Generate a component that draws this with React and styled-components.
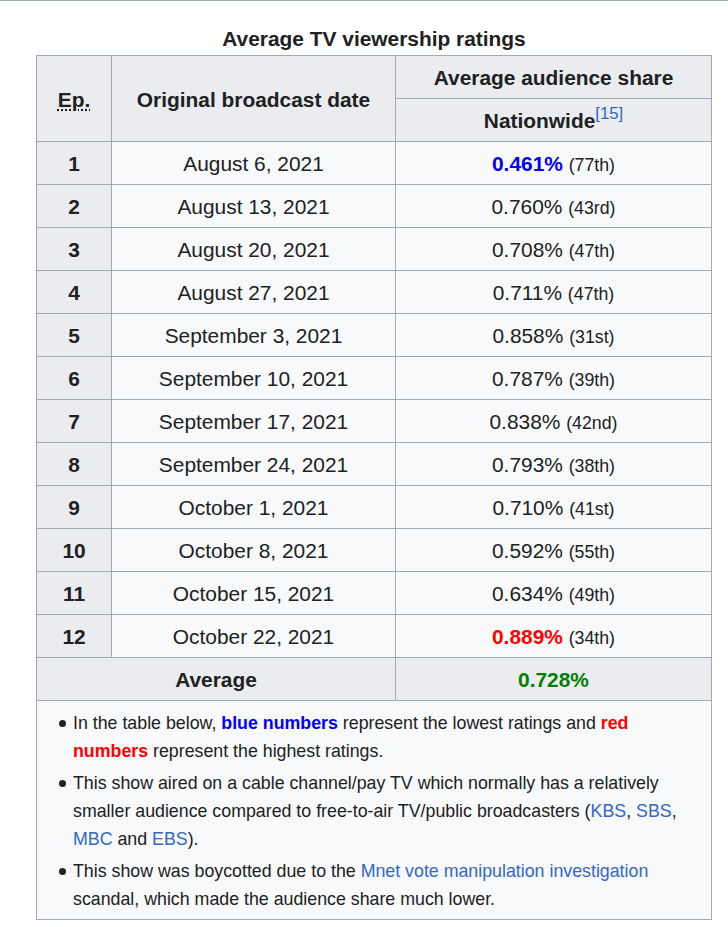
import React from "react";
import styled, {createGlobalStyle} from "styled-components";

const rows = [
  {ep: 1, date: "August 6, 2021", share: "0.461%", rank: "77th", mark: "low"},
  {ep: 2, date: "August 13, 2021", share: "0.760%", rank: "43rd"},
  {ep: 3, date: "August 20, 2021", share: "0.708%", rank: "47th"},
  {ep: 4, date: "August 27, 2021", share: "0.711%", rank: "47th"},
  {ep: 5, date: "September 3, 2021", share: "0.858%", rank: "31st"},
  {ep: 6, date: "September 10, 2021", share: "0.787%", rank: "39th"},
  {ep: 7, date: "September 17, 2021", share: "0.838%", rank: "42nd"},
  {ep: 8, date: "September 24, 2021", share: "0.793%", rank: "38th"},
  {ep: 9, date: "October 1, 2021", share: "0.710%", rank: "41st"},
  {ep: 10, date: "October 8, 2021", share: "0.592%", rank: "55th"},
  {ep: 11, date: "October 15, 2021", share: "0.634%", rank: "49th"},
  {ep: 12, date: "October 22, 2021", share: "0.889%", rank: "34th", mark: "high"},
];

const GlobalStyle = createGlobalStyle`
  body {
    margin: 0;
    background: #fff;
    font-family: "Liberation Sans", Arial, sans-serif;
    color: #202122;
  }
`;

const Page = styled.div`
  border-top: 1px solid #a2a9b1;
  padding: 21px 0 0 36px;
`;

const Table = styled.table`
  width: 675px;
  table-layout: fixed;
  border-collapse: collapse;
  background: #f8f9fa;
  font-size: 20.9px;
  line-height: 33px;
  color: #202122;

  caption {
    font-weight: bold;
    text-align: center;
    padding: 0;
  }
`;

const Head = styled.th`
  background: #eaecf0;
  border: 1px solid #a2a9b1;
  padding: 5px 8px 4px;
  font-weight: bold;
  text-align: center;
`;

const Cell = styled.td`
  border: 1px solid #a2a9b1;
  padding: 5px 8px 4px;
  text-align: center;
  background: ${p => (p.$grey ? "#eaecf0" : "#f8f9fa")};
`;

const Abbr = styled.span`
  text-decoration: underline dotted;
  text-underline-offset: 3px;
`;

const Sup = styled.sup`
  font-size: 0.8em;
  font-weight: normal;
  line-height: 1;
  vertical-align: 0.55em;
  color: #3366cc;
`;

const Share = styled.span`
  font-weight: ${p => (p.$tone ? "bold" : "normal")};
  color: ${p => p.$tone || "inherit"};
`;

const Rank = styled.span`
  font-size: 85%;
  line-height: 1;
`;

const NotesCell = styled.td`
  border: 1px solid #a2a9b1;
  padding: 8px 8px 2px 8px;
  text-align: left;
  font-size: 17.8px;
  line-height: 28px;
`;

const List = styled.ul`
  margin: 0;
  padding: 0;
  list-style: none;
`;

const Item = styled.li`
  position: relative;
  padding-left: 28px;
  margin-bottom: 4px;

  &::before {
    content: "";
    position: absolute;
    left: 14px;
    top: 11px;
    width: 7px;
    height: 7px;
    border-radius: 50%;
    background: #202122;
  }
`;

const Strong = styled.b`
  color: ${p => p.$c};
`;

const Link = styled.a`
  color: #3366cc;
  text-decoration: none;
`;

const tones = {low: "#0000ff", high: "#ff0000"};

export default function App() {
  return (
    <Page>
      <GlobalStyle/>
      <Table>
        <caption>Average TV viewership ratings</caption>
        <colgroup>
          <col style={{width: 75}}/>
          <col style={{width: 284}}/>
          <col style={{width: 316}}/>
        </colgroup>
        <thead>
          <tr>
            <Head rowSpan={2}><Abbr>Ep.</Abbr></Head>
            <Head rowSpan={2}>Original broadcast date</Head>
            <Head>Average audience share</Head>
          </tr>
          <tr>
            <Head>Nationwide<Sup>[15]</Sup></Head>
          </tr>
        </thead>
        <tbody>
          {rows.map(r => (
            <tr key={r.ep}>
              <Head>{r.ep}</Head>
              <Cell>{r.date}</Cell>
              <Cell>
                <Share $tone={tones[r.mark]}>{r.share}</Share> <Rank>({r.rank})</Rank>
              </Cell>
            </tr>
          ))}
          <tr>
            <Head colSpan={2}>Average</Head>
            <Cell $grey><Share $tone="#008000">0.728%</Share></Cell>
          </tr>
          <tr>
            <NotesCell colSpan={3}>
              <List>
                <Item>
                  In the table below, <Strong $c="#0000ff">blue numbers</Strong> represent the lowest
                  ratings and <Strong $c="#ff0000">red numbers</Strong> represent the highest ratings.
                </Item>
                <Item>
                  This show aired on a cable channel/pay TV which normally has a relatively smaller
                  audience compared to free-to-air TV/public broadcasters (<Link>KBS</Link>, <Link>SBS</Link>,{" "}
                  <Link>MBC</Link> and <Link>EBS</Link>).
                </Item>
                <Item>
                  This show was boycotted due to the <Link>Mnet vote manipulation investigation</Link>{" "}
                  scandal, which made the audience share much lower.
                </Item>
              </List>
            </NotesCell>
          </tr>
        </tbody>
      </Table>
    </Page>
  );
}
